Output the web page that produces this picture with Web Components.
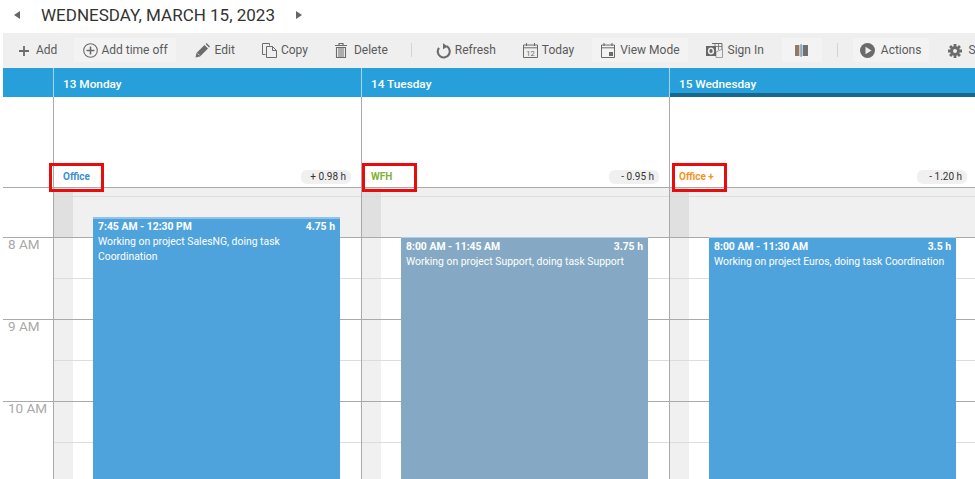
<!DOCTYPE html>
<html>
<head>
<meta charset="utf-8">
<style>
  html, body { margin: 0; height: 479px; overflow: hidden; background: #fff; }
  body { font-family: Roboto, "Liberation Sans", sans-serif; }
</style>
</head>
<body>
<cal-title>Wednesday, March 15, 2023</cal-title>
<cal-toolbar>
  <tool-button icon="plus" style="--w:10px;--gap:7px;--pr:7px">Add</tool-button>
  <tool-button icon="plusCircle" active style="--w:15px;--gap:3px">Add time off</tool-button>
  <tool-button icon="pencil" style="--w:15px;--gap:5px">Edit</tool-button>
  <tool-button icon="copy" style="--w:15px;--gap:4px">Copy</tool-button>
  <tool-button icon="trash" style="--w:12px;--gap:7px">Delete</tool-button>
  <tool-sep></tool-sep>
  <tool-button icon="refresh" style="--w:15px;--gap:4px">Refresh</tool-button>
  <tool-button icon="today" style="--w:15px;--gap:4px">Today</tool-button>
  <tool-button icon="calendar" active style="--w:14px;--gap:5px">View Mode</tool-button>
  <tool-button icon="outlook" style="--w:17px;--gap:5px;--pl:8px">Sign In</tool-button>
  <tool-button icon="columns" active style="--w:13px;--gap:0px;--pl:13px;--pr:14px"></tool-button>
  <tool-sep></tool-sep>
  <tool-button icon="play" active style="--w:15px;--gap:6px;--pl:7px">Actions</tool-button>
  <tool-button icon="gear" style="--w:14px;--gap:6px">Settings</tool-button>
</cal-toolbar>
<cal-week>
  <day-column slot="day" label="13 Monday" type="Office" type-color="#3d8fd1" balance="+ 0.98 h" flag-left="-5px">
    <time-entry top="29" time="7:45 AM - 12:30 PM" hours="4.75 h" top-strip>Working on project SalesNG, doing task Coordination</time-entry>
  </day-column>
  <day-column slot="day" label="14 Tuesday" type="WFH" type-color="#7fb135" balance="- 0.95 h" flag-left="0px">
    <time-entry top="49" time="8:00 AM - 11:45 AM" hours="3.75 h" color="#85a9c4">Working on project Support, doing task Support</time-entry>
  </day-column>
  <day-column slot="day" label="15 Wednesday" type="Office +" type-color="#f7941d" balance="- 1.20 h" flag-left="2px" today>
    <time-entry top="49" time="8:00 AM - 11:30 AM" hours="3.5 h">Working on project Euros, doing task Coordination</time-entry>
  </day-column>
</cal-week>

<script>
const ICONS = {
  plus: `<svg viewBox="0 0 10 10" width="10" height="10"><path d="M5 0v10M0 5h10" stroke="#6b6b6b" stroke-width="1.8"/></svg>`,
  plusCircle: `<svg viewBox="0 0 15 15" width="15" height="15" fill="none" stroke="#6b6b6b"><circle cx="7.5" cy="7.5" r="6.8" stroke-width="1.1"/><path d="M7.5 3.5v8M3.5 7.5h8" stroke-width="1.6"/></svg>`,
  pencil: `<svg viewBox="0 0 15 15" width="15" height="15"><path d="M0.5 14.5l1-4.5 8-8 3.5 3.5-8 8zM10.6 1l1-1 3.4 3.4-1 1z" fill="#6b6b6b"/><path d="M2.6 10.4l2 2" stroke="#efefef" stroke-width=".8"/></svg>`,
  copy: `<svg viewBox="0 0 15 15" width="15" height="15" fill="none" stroke="#6b6b6b"><path d="M3.5 11.5h-3v-11h7v2"/><path d="M4.5 3.5h6l4 4v7h-10zM10.5 3.5v4h4" fill="#efefef"/></svg>`,
  trash: `<svg viewBox="0 0 12 15" width="12" height="15" fill="none" stroke="#6b6b6b"><path d="M0 2.5h12M4 2.5v-2h4v2" stroke-width="1.2"/><path d="M1.5 4.5h9v10h-9z" stroke-width="1.1"/><path d="M4 5v9M6 5v9M8 5v9" stroke-width="1"/></svg>`,
  refresh: `<svg viewBox="0 0 15 16" width="15" height="16"><path d="M10.6 3.2a6 6 0 1 1-7.6 1.6" fill="none" stroke="#6b6b6b" stroke-width="2.1"/><path d="M7 0.2l4.8 3.2-4.8 2.8z" fill="#6b6b6b"/></svg>`,
  today: `<svg viewBox="0 0 15 15" width="15" height="15" fill="none" stroke="#6b6b6b"><path d="M.5 2h14v12.5H.5zM.5 4.8h14M3.5 0v3M11.5 0v3"/><text x="7.5" y="12.6" font-size="7.5" font-family="Roboto" text-anchor="middle" fill="#6b6b6b" stroke="none">12</text></svg>`,
  calendar: `<svg viewBox="0 0 14 15" width="14" height="15" fill="none" stroke="#6b6b6b"><path d="M.5 2h13v12.5H.5zM.5 4.8h13M3 0v3M11 0v3"/><rect x="8" y="9" width="4" height="4" fill="#6b6b6b" stroke="none"/></svg>`,
  outlook: `<svg viewBox="0 0 17 15" width="17" height="15"><path d="M6 .5h10v12" fill="none" stroke="#6b6b6b"/><path d="M9 1v5M12.5 1v6M6 3.5h10" stroke="#6b6b6b" stroke-width=".8"/><path d="M10 9l6.5-3v8.5H10z" fill="#efefef" stroke="#8a8a8a" stroke-width=".8"/><rect x="0" y="3" width="10" height="10" fill="#666"/><ellipse cx="5" cy="8" rx="2.4" ry="2.8" fill="none" stroke="#efefef" stroke-width="1.5"/></svg>`,
  columns: `<svg viewBox="0 0 13 13" width="13" height="13"><rect x="0" y="1" width="4" height="11" fill="#93795f"/><rect x="8" y="1" width="5" height="11" fill="#6f7070"/><rect x="4" y="1" width="4" height="11" fill="#c9c9c9"/><rect x="5.5" y="0" width="1.2" height="13" fill="#6f9fc6"/></svg>`,
  play: `<svg viewBox="0 0 15 15" width="15" height="15"><circle cx="7.5" cy="7.5" r="7.5" fill="#6b6b6b"/><path d="M5.5 3.8l6 3.7-6 3.7z" fill="#efefef"/></svg>`,
  gear: `<svg viewBox="0 0 14 14" width="14" height="14"><g fill="#6b6b6b"><circle cx="7" cy="7" r="4.8"/><path d="M5.6 0h2.8v3H5.6zM5.6 11h2.8v3H5.6zM0 5.6h3v2.8H0zM11 5.6h3v2.8h-3z"/><path d="M5.6 0h2.8v3H5.6zM5.6 11h2.8v3H5.6zM0 5.6h3v2.8H0zM11 5.6h3v2.8h-3z" transform="rotate(45 7 7)"/></g><circle cx="7" cy="7" r="2" fill="#efefef"/></svg>`,
};

class CalTitle extends HTMLElement {
  constructor() {
    super();
    this.attachShadow({ mode: "open" });
  }

  connectedCallback() {
    this.shadowRoot.innerHTML = `
      <style>
        :host {
          display: flex;
          align-items: center;
          height: 33px;
          padding: 0 0 3px 14px;
          box-sizing: border-box;
        }
        .arrow {
          width: 0;
          height: 0;
          border-top: 4px solid transparent;
          border-bottom: 4px solid transparent;
        }
        .prev { border-right: 6px solid #666; }
        .next { border-left: 6px solid #666; }
        .text {
          margin: 0 21px;
          font-size: 17px;
          line-height: 24px;
          color: #333;
          text-transform: uppercase;
          white-space: nowrap;
        }
      </style>
      <span class="arrow prev"></span>
      <span class="text"><slot></slot></span>
      <span class="arrow next"></span>
    `;
  }
}

class CalToolbar extends HTMLElement {
  constructor() {
    super();
    this.attachShadow({ mode: "open" });
    this.shadowRoot.innerHTML = `
      <style>
        :host {
          display: flex;
          align-items: center;
          gap: 10px;
          height: 35px;
          margin-left: 3px;
          padding: 0 0 1px 7px;
          box-sizing: border-box;
          background: #efefef;
          white-space: nowrap;
        }
      </style>
      <slot></slot>
    `;
  }
}

class ToolButton extends HTMLElement {
  constructor() {
    super();
    this.attachShadow({ mode: "open" });
  }

  connectedCallback() {
    this.shadowRoot.innerHTML = `
      <style>
        :host {
          display: flex;
          flex: none;
          align-items: center;
          height: 24px;
          padding: 0 var(--pr, 8px) 0 var(--pl, 9px);
          gap: var(--gap, 4px);
          font-size: 12px;
          color: #5a5a5a;
        }
        :host([active]) { background: #f3f3f3; }
        .icon { display: flex; width: var(--w, 15px); flex: none; margin-top: 1px; }
      </style>
      <span class="icon">${ICONS[this.getAttribute("icon")]}</span>
      <slot></slot>
    `;
  }
}

class ToolSep extends HTMLElement {
  constructor() {
    super();
    this.attachShadow({ mode: "open" });
    this.shadowRoot.innerHTML = `
      <style>
        :host {
          display: block;
          flex: none;
          width: 1px;
          height: 14px;
          margin: 0 5px;
          background: #d4d4d4;
        }
      </style>
    `;
  }
}

class CalWeek extends HTMLElement {
  constructor() {
    super();
    this.attachShadow({ mode: "open" });
  }

  connectedCallback() {
    const hours = ["8 AM", "9 AM", "10 AM"]
      .map((h) => `<div class="hour">${h}</div>`)
      .join("");
    this.shadowRoot.innerHTML = `
      <style>
        :host {
          display: grid;
          grid-template-columns: 50px repeat(3, 308px);
          margin-left: 3px;
          height: 411px;
          overflow: hidden;
        }
        .gutter { display: flex; flex-direction: column; }
        .head { height: 29px; background: #269fdb; flex: none; }
        .allday { height: 91px; box-sizing: border-box; border-bottom: 1px solid #aaa; flex: none; }
        .pre { height: 50px; box-sizing: border-box; border-bottom: 1px solid #aaa; flex: none; }
        .hour {
          height: 82px;
          box-sizing: border-box;
          border-bottom: 1px solid #aaa;
          padding: 0 0 0 5px;
          font-size: 13.5px;
          line-height: 12px;
          color: #a9a9a9;
          flex: none;
        }
      </style>
      <div class="gutter">
        <div class="head"></div>
        <div class="allday"></div>
        <div class="pre"></div>
        ${hours}
      </div>
      <slot name="day"></slot>
    `;
  }
}

class DayColumn extends HTMLElement {
  constructor() {
    super();
    this.attachShadow({ mode: "open" });
  }

  connectedCallback() {
    // half hour rows, 41px each, the first ones are outside working hours
    let rows = `<div class="row off short"><i></i></div>`;
    for (let i = 0; i < 7; i++) {
      const cls = (i === 0 ? "off " : "") + (i % 2 === 0 ? "hour" : "half");
      rows += `<div class="row ${cls}"><i></i></div>`;
    }
    this.shadowRoot.innerHTML = `
      <style>
        :host {
          display: flex;
          flex-direction: column;
          width: 308px;
          min-width: 0;
        }
        .head {
          position: relative;
          display: flex;
          align-items: center;
          height: 29px;
          padding: 2px 0 0 9px;
          box-sizing: border-box;
          background: #269fdb;
          border-left: 1px solid #a8d6ee;
          color: #fff;
          font-size: 11.8px;
          font-weight: 500;
          flex: none;
        }
        :host([today]) .head::after {
          content: "";
          position: absolute;
          left: 0;
          right: 0;
          bottom: 0;
          height: 4px;
          background: #17678f;
        }
        .allday {
          position: relative;
          display: flex;
          align-items: flex-end;
          justify-content: space-between;
          height: 91px;
          padding: 0 10px 3px 9px;
          box-sizing: border-box;
          border-left: 1px solid #aaa;
          border-bottom: 1px solid #aaa;
          flex: none;
        }
        .type {
          font-size: 10px;
          font-weight: 700;
          line-height: 14px;
          color: ${this.getAttribute("type-color")};
        }
        .balance {
          min-width: 50px;
          box-sizing: border-box;
          height: 14px;
          padding: 0 5px;
          border-radius: 6px;
          background: #f0f0f0;
          font-size: 10px;
          line-height: 14px;
          text-align: right;
          color: #333;
        }
        .flag {
          position: absolute;
          left: ${this.getAttribute("flag-left")};
          top: 66px;
          width: 55px;
          height: 29px;
          box-sizing: border-box;
          border: 3px solid #e80c0c;
          z-index: 2;
        }
        .body {
          position: relative;
          border-left: 1px solid #aaa;
          flex: 1;
        }
        .row {
          display: flex;
          height: 41px;
          box-sizing: border-box;
        }
        .row i { display: block; width: 19px; background: #f0f0f0; flex: none; }
        .row.off { background: #f0f0f0; }
        .row.off i { background: #e0e0e0; }
        .row.short { height: 9px; border-bottom: 1px solid #ddd; }
        .row.hour { border-bottom: 1px solid #aaa; }
        .row.half { border-bottom: 1px solid #ddd; }
      </style>
      <div class="head">${this.getAttribute("label")}</div>
      <div class="allday">
        <span class="type">${this.getAttribute("type")}</span>
        <span class="balance">${this.getAttribute("balance")}</span>
        <span class="flag"></span>
      </div>
      <div class="body">
        ${rows}
        <slot></slot>
      </div>
    `;
  }
}

class TimeEntry extends HTMLElement {
  constructor() {
    super();
    this.attachShadow({ mode: "open" });
  }

  connectedCallback() {
    const color = this.getAttribute("color") || "#4fa3dc";
    this.shadowRoot.innerHTML = `
      <style>
        :host {
          position: absolute;
          left: 39px;
          top: ${this.getAttribute("top")}px;
          bottom: 0;
          width: 247px;
          box-sizing: border-box;
          padding: 1px 5px;
          background: ${color};
          color: #fff;
          font-size: 10.4px;
          line-height: 15px;
          border-top: 1px solid #a9cfe9;
        }
        :host([top-strip]) { border-top: 2px solid #8fc4e8; padding-top: 0; }
        .top {
          display: flex;
          justify-content: space-between;
          font-weight: 700;
        }
      </style>
      <div class="top"><span>${this.getAttribute("time")}</span><span>${this.getAttribute("hours")}</span></div>
      <div><slot></slot></div>
    `;
  }
}

customElements.define("cal-title", CalTitle);
customElements.define("cal-toolbar", CalToolbar);
customElements.define("tool-button", ToolButton);
customElements.define("tool-sep", ToolSep);
customElements.define("cal-week", CalWeek);
customElements.define("day-column", DayColumn);
customElements.define("time-entry", TimeEntry);
</script>
</body>
</html>
